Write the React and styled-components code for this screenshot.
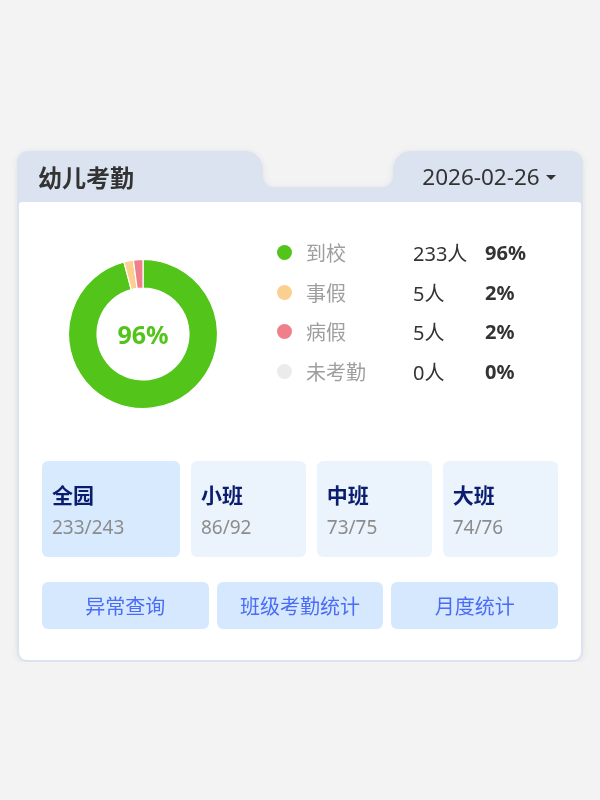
import React from "react";
import styled, { createGlobalStyle } from "styled-components";

const HEAD = "#dae3ef";

const Global = createGlobalStyle`
  body {
    margin: 0;
    background: #f3f3f3;
    font-family: "Noto Sans", "Noto Sans CJK SC", sans-serif;
  }
`;

const Page = styled.div`
  padding: 151px 0 0 17px;
`;

const Card = styled.div`
  width: 566px;
  filter: drop-shadow(0 1px 3px rgba(0, 0, 0, 0.07));
`;

const Header = styled.div`
  display: flex;
  height: 51px;
`;

const LeftTab = styled.div`
  box-sizing: border-box;
  width: 246px;
  background: ${HEAD};
  border-radius: 11px 18px 0 0;
  display: flex;
  align-items: center;
  padding-left: 21px;
  font-size: 24px;
  font-weight: 700;
  color: #333;
`;

const Bridge = styled.div`
  flex: 1;
  align-self: flex-end;
  height: 15px;
  background: ${HEAD};
  position: relative;
  &::before,
  &::after {
    content: "";
    position: absolute;
    bottom: 100%;
    width: 10px;
    height: 10px;
  }
  &::before {
    left: 0;
    background: radial-gradient(circle at 100% 0, transparent 9.5px, ${HEAD} 10px);
  }
  &::after {
    right: 0;
    background: radial-gradient(circle at 0 0, transparent 9.5px, ${HEAD} 10px);
  }
`;

const RightTab = styled.div`
  box-sizing: border-box;
  width: 190px;
  background: ${HEAD};
  border-radius: 18px 12px 0 0;
  display: flex;
  align-items: center;
  justify-content: center;
  gap: 6px;
  font-size: 22.5px;
  color: #333;
  padding-left: 2px;
`;

const Caret = styled.span`
  width: 0;
  height: 0;
  border-left: 5px solid transparent;
  border-right: 5px solid transparent;
  border-top: 5px solid #333;
  margin-top: 2px;
`;

const Frame = styled.div`
  background: ${HEAD};
  padding: 0 2px 2px;
  border-radius: 0 0 10px 10px;
`;

const Body = styled.div`
  background: #fff;
  border-radius: 3px 3px 8px 8px;
  padding: 0 23px 31px;
`;

const TopSection = styled.div`
  display: flex;
  align-items: flex-start;
  height: 259px;
`;

const DonutBox = styled.div`
  position: relative;
  width: 150px;
  height: 150px;
  margin: 57px 0 0 26px;
  flex: none;
`;

const DonutLabel = styled.div`
  position: absolute;
  inset: 0;
  display: flex;
  align-items: center;
  justify-content: center;
  font-size: 25px;
  font-weight: 700;
  color: #52c41a;
`;

const Legend = styled.div`
  display: grid;
  grid-template-columns: 29px 107px 72px auto;
  grid-auto-rows: 39.5px;
  align-items: center;
  margin: 31px 0 0 59px;
  font-size: 20px;
`;

const Dot = styled.span`
  width: 15px;
  height: 15px;
  border-radius: 50%;
  background: ${(p) => p.$color};
`;

const Label = styled.span`
  color: #9e9e9e;
`;

const Count = styled.span`
  color: #333;
`;

const Pct = styled.span`
  color: #333;
  font-weight: 700;
`;

const Classes = styled.div`
  display: grid;
  grid-template-columns: 1.2fr 1fr 1fr 1fr;
  gap: 10.5px;
`;

const ClassCard = styled.div`
  height: 96px;
  box-sizing: border-box;
  border-radius: 6px;
  background: ${(p) => (p.$active ? "#d8eafd" : "#ebf4fd")};
  padding: 21px 0 0 10px;
`;

const ClassName = styled.div`
  font-size: 21px;
  line-height: 26px;
  font-weight: 700;
  color: #0b1d6e;
`;

const ClassNum = styled.div`
  margin-top: 7px;
  font-size: 19px;
  line-height: 24px;
  color: #8c8c8c;
`;

const Actions = styled.div`
  display: grid;
  grid-template-columns: repeat(3, 1fr);
  gap: 8px;
  margin-top: 25px;
`;

const ActionButton = styled.button`
  height: 47px;
  border: none;
  border-radius: 6px;
  background: #d6e8fd;
  color: #4a6cf7;
  font-family: inherit;
  font-size: 20px;
  padding: 0;
  cursor: pointer;
`;

const legend = [
  { name: "到校", count: 233, color: "#52c41a" },
  { name: "事假", count: 5, color: "#fbcf90" },
  { name: "病假", count: 5, color: "#ee7f8b" },
  { name: "未考勤", count: 0, color: "#ebebeb" },
];

const total = 243;
const percents = ["96%", "2%", "2%", "0%"];

function sector(cx, cy, R, r, a0, a1) {
  const p = (rad, a) => {
    const t = ((a - 90) * Math.PI) / 180;
    return [cx + rad * Math.cos(t), cy + rad * Math.sin(t)];
  };
  const large = a1 - a0 > 180 ? 1 : 0;
  const [x0, y0] = p(R, a0);
  const [x1, y1] = p(R, a1);
  const [x2, y2] = p(r, a1);
  const [x3, y3] = p(r, a0);
  return `M${x0} ${y0} A${R} ${R} 0 ${large} 1 ${x1} ${y1} L${x2} ${y2} A${r} ${r} 0 ${large} 0 ${x3} ${y3} Z`;
}

function Donut() {
  let a = 0;
  const parts = legend
    .filter((l) => l.count > 0)
    .map((l) => {
      const a0 = a;
      const a1 = a + (l.count / total) * 360;
      a = a1;
      return { d: sector(75, 75, 74.5, 46, a0, a1), color: l.color, key: l.name };
    });
  return (
    <svg width="150" height="150" viewBox="0 0 150 150">
      {parts.map((p) => (
        <path key={p.key} d={p.d} fill={p.color} stroke="#fff" strokeWidth="1.2" />
      ))}
    </svg>
  );
}

const classes = [
  { name: "全园", num: "233/243", active: true },
  { name: "小班", num: "86/92" },
  { name: "中班", num: "73/75" },
  { name: "大班", num: "74/76" },
];

export default function App() {
  return (
    <Page>
      <Global />
      <Card>
        <Header>
          <LeftTab>幼儿考勤</LeftTab>
          <Bridge />
          <RightTab>
            2026-02-26
            <Caret />
          </RightTab>
        </Header>
        <Frame>
          <Body>
            <TopSection>
              <DonutBox>
                <Donut />
                <DonutLabel>96%</DonutLabel>
              </DonutBox>
              <Legend>
                {legend.map((l, i) => (
                  <React.Fragment key={l.name}>
                    <Dot $color={l.color} />
                    <Label>{l.name}</Label>
                    <Count>{l.count}人</Count>
                    <Pct>{percents[i]}</Pct>
                  </React.Fragment>
                ))}
              </Legend>
            </TopSection>
            <Classes>
              {classes.map((c) => (
                <ClassCard key={c.name} $active={c.active}>
                  <ClassName>{c.name}</ClassName>
                  <ClassNum>{c.num}</ClassNum>
                </ClassCard>
              ))}
            </Classes>
            <Actions>
              <ActionButton>异常查询</ActionButton>
              <ActionButton>班级考勤统计</ActionButton>
              <ActionButton>月度统计</ActionButton>
            </Actions>
          </Body>
        </Frame>
      </Card>
    </Page>
  );
}
